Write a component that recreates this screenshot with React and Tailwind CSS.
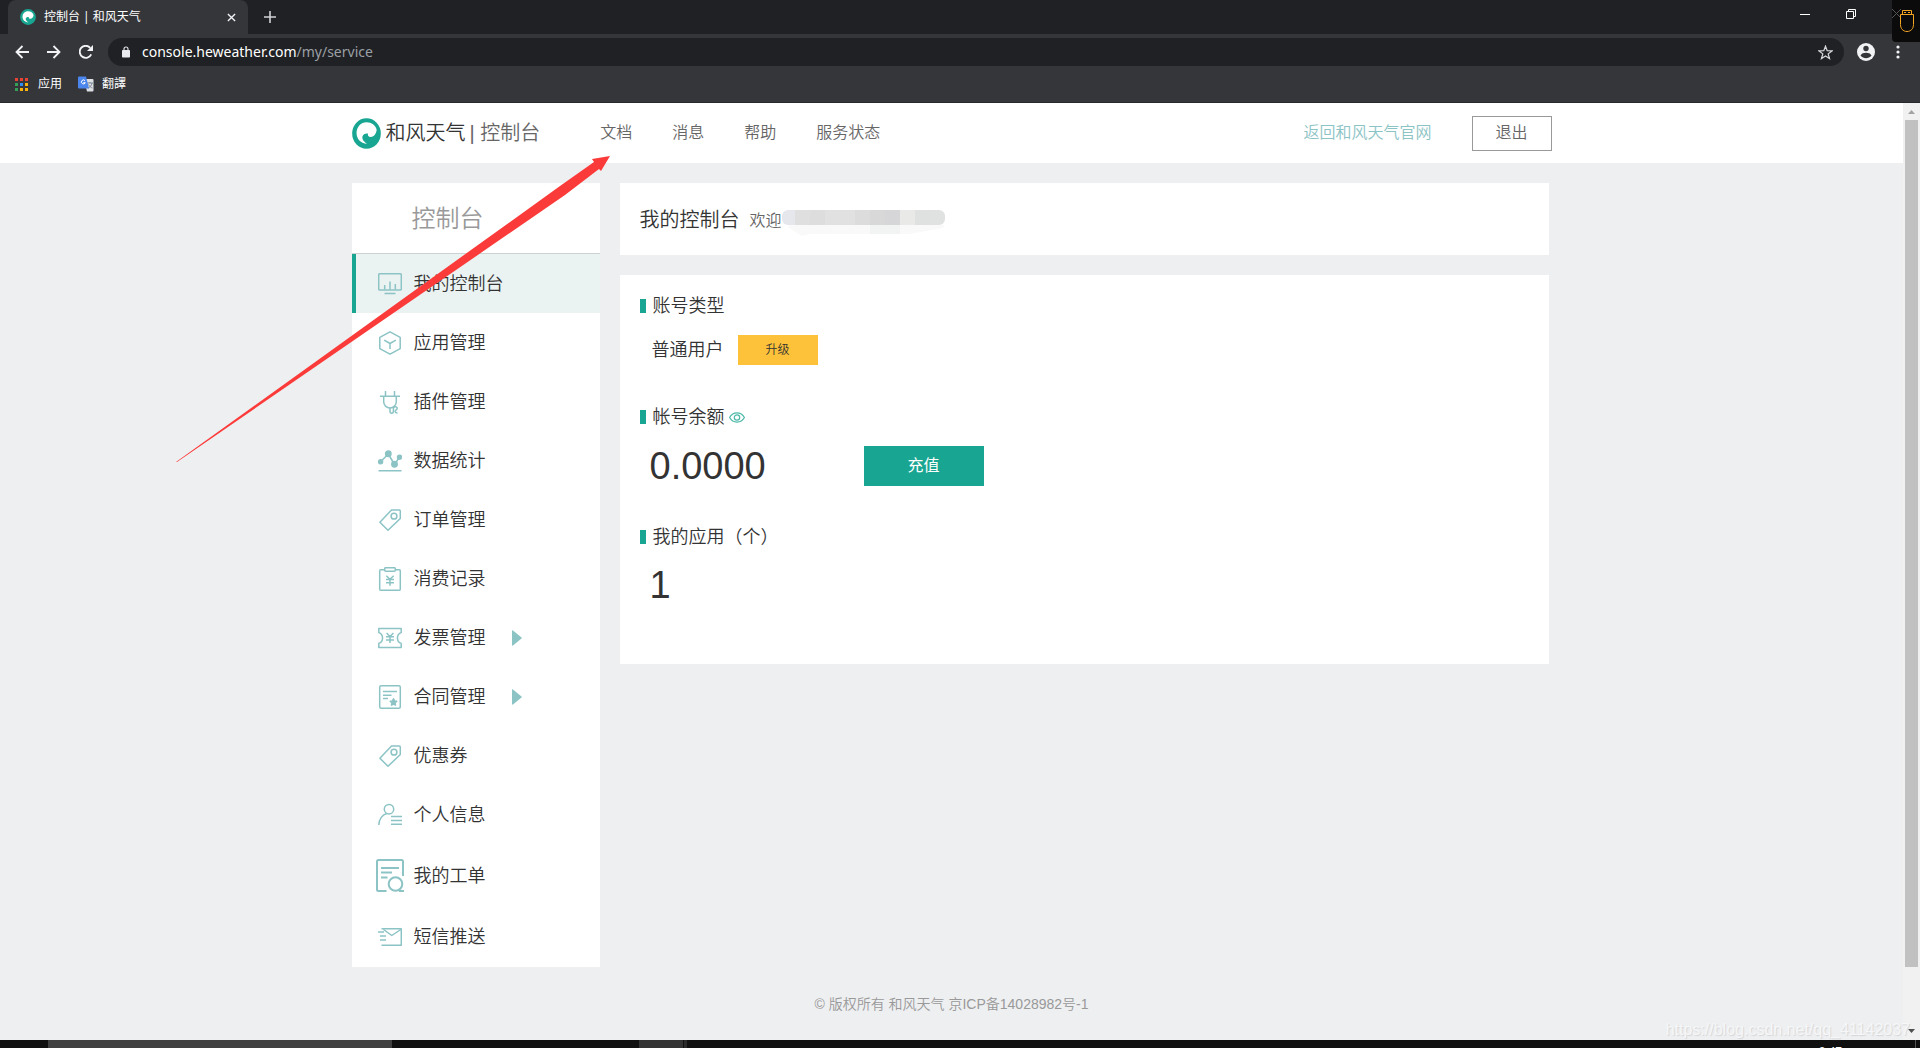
import { useState } from "react";

const NAV = ["文档", "消息", "帮助", "服务状态"];

const MENU = [
    { label: "我的控制台", icon: "monitor" },
    { label: "应用管理", icon: "cube" },
    { label: "插件管理", icon: "plug" },
    { label: "数据统计", icon: "stats" },
    { label: "订单管理", icon: "tag" },
    { label: "消费记录", icon: "clipboard" },
    { label: "发票管理", icon: "ticket", more: true },
    { label: "合同管理", icon: "contract", more: true },
    { label: "优惠券", icon: "tag" },
    { label: "个人信息", icon: "user" },
    { label: "我的工单", icon: "order", large: true },
    { label: "短信推送", icon: "mail" },
];

const ICONS = {
    monitor: (
        <>
            <rect x="0.7" y="1.7" width="22.6" height="16.2" rx="1" />
            <path d="M6.7 17.5v-4.5M12 17.5v-8M17.3 17.5v-5.5M6.5 21.5h11" />
        </>
    ),
    cube: (
        <>
            <path d="M12 0.8 22.2 6.4v11.2L12 23.2 1.8 17.6V6.4z" />
            <path d="M6.2 9.2 12 12.5l5.8-3.3M12 12.5V18" />
        </>
    ),
    plug: (
        <>
            <path d="M2 6.2h20M7.5 1v5M16.5 1v5M5.7 6.5v5.2a6.3 6.3 0 0 0 12.6 0V6.5" />
            <path d="M12 17.8v3.400c0 2.600 3.400 2.600 3.400 0v-2.400c0-2.600 3.800-2.600 3.800-.500 0 1.800-2 1.500-2 3 0 1.200 1 1.700 2.300 1.700" />
        </>
    ),
    stats: (
        <>
            <path d="M2.600 12.800 10.300 5l6.200 10.500 5-7.300M0.500 21.800h23" />
            <circle cx="2.600" cy="12.800" r="2" fill="#8cc3c5" />
            <circle cx="10.300" cy="4.800" r="2.700" fill="#8cc3c5" />
            <circle cx="16.500" cy="15.300" r="2.700" fill="#8cc3c5" />
            <circle cx="21.500" cy="8.200" r="2" fill="#8cc3c5" />
        </>
    ),
    tag: (
        <>
            <path d="M13.500 2h7.800q1 0 1 1v7.500L10 22.300 1.900 14.200z" />
            <circle cx="16" cy="8.200" r="2.900" />
        </>
    ),
    clipboard: (
        <>
            <path d="M6.500 2.800H2.700q-1 0-1 1v18.400q0 1 1 1h18.600q1 0 1-1V3.800q0-1-1-1h-3.800" />
            <rect x="6.700" y="0.700" width="10.600" height="3.600" rx="1" />
            <path d="M8.300 8.700 12 12.300l3.700-3.600M12 12.300v6.400M8 12.500h8M8 15.700h8" />
        </>
    ),
    ticket: (
        <>
            <path d="M0.800 2.400h22.400v4.200c-5 1.500-5 9.300 0 10.800v4.200H0.800v-4.200c5-1.500 5-9.300 0-10.800z" />
            <path d="M8.600 7 12 10.500 15.400 7M12 10.500V17M8 10.700h8M8 14h8" />
        </>
    ),
    contract: (
        <>
            <rect x="1.700" y="0.800" width="20.600" height="22.400" rx="1.500" />
            <path d="M5 6.500h14M5 10.300h8.500M5 13.500h5" />
            <path
                d="m15.500 13.800 1 2.100 2.300.300-1.700 1.600.400 2.300-2-1.100-2 1.100.400-2.300-1.700-1.600 2.300-.300z"
                fill="#8cc3c5"
            />
        </>
    ),
    user: (
        <>
            <circle cx="11" cy="6.200" r="4.700" />
            <path d="M0.800 22c.200-6 3.700-10.500 8-11.500M13 13.500h11M13 17.500h11M13 21.300h11" />
        </>
    ),
    order: (
        <>
            <path d="M11 27.500M10.500 32H2.500Q1 32 1 30.500V2.500Q1 1 2.500 1h23Q27 1 27 2.500V17" />
            <path d="M5 9h18M5 13.500h11M5 18.500h6.500M23 32h5" />
            <circle cx="19.500" cy="25" r="6.800" />
        </>
    ),
    mail: (
        <>
            <path d="M3.500 3.800h19.800v16.400H3.500M0 7h6M2 11h6M2 15h6" />
            <path d="M5.500 4.500 13.800 10.500l9-6" />
        </>
    ),
};

function MenuIcon({ name, large }) {
    return (
        <svg
            viewBox={large ? "0 0 28 33" : "0 0 24 24"}
            fill="none"
            stroke="#8cc3c5"
            strokeWidth={large ? "2" : "1.5"}
            strokeLinejoin="round"
            className={large ? "h-[33px] w-7 shrink-0" : "h-6 w-6 shrink-0"}
        >
            {ICONS[name]}
        </svg>
    );
}

function LogoMark({ className }) {
    return (
        <svg viewBox="0 0 30 32" preserveAspectRatio="none" className={className}>
            <ellipse cx="15" cy="16" rx="14.800" ry="15.800" fill="#18a692" />
            <path
                d="M15.500 26.500C9 26.500 4.700 21.500 4.700 15.500 4.700 9 9.300 4.300 15 4.300c5.500 0 9.200 3.200 10.500 7.500-.300 4.700-3 7.700-6.300 7.700-2 0-3.200-1.200-2.700-3.500-3-.300-5 .700-5.700 3-.700 2.700 1.700 5.500 4.700 7.500z"
                fill="#fff"
            />
        </svg>
    );
}

function Browser() {
    return (
        <div className="relative h-[103px] border-b border-[#28292c] bg-[#35363a] font-['Noto_Sans','Noto_Sans_CJK_SC',sans-serif] font-normal text-white">
            <div className="flex h-[34px] bg-[#202124] pl-2">
                <div className="flex w-60 items-center rounded-t-lg bg-[#35363a] pr-3 pl-3">
                    <LogoMark className="h-4 w-4" />
                    <span className="ml-2 flex-1 text-xs">控制台 | 和风天气</span>
                    <button type="button" aria-label="关闭标签页">
                        <svg viewBox="0 0 10 10" stroke="#f1f3f4" strokeWidth="1.5" className="h-[9px] w-[9px]">
                            <path d="M1 1l8 8M9 1 1 9" />
                        </svg>
                    </button>
                </div>
                <button type="button" aria-label="新标签页" className="ml-4">
                    <svg viewBox="0 0 12 12" stroke="#d0d2d5" strokeWidth="1.600" className="h-3 w-3">
                        <path d="M6 0v12M0 6h12" />
                    </svg>
                </button>
                <div className="mr-16 ml-auto flex items-center gap-9 pb-1.5">
                    <button type="button" aria-label="最小化">
                        <svg viewBox="0 0 10 10" width="10" height="10">
                            <path d="M0 5.500h10" stroke="#fff" />
                        </svg>
                    </button>
                    <button type="button" aria-label="还原">
                        <svg viewBox="0 0 10 10" width="10" height="10" fill="none" stroke="#fff">
                            <path d="M0.500 2.500h7v7h-7zM2.500 2.500v-2h7v7h-2" />
                        </svg>
                    </button>
                </div>
            </div>

            <div className="flex h-9 items-center pr-5 pl-[15px]">
                <button type="button" aria-label="后退" className="mr-[18px]">
                    <svg viewBox="0 0 14 14" width="14" height="14" fill="none" stroke="#f1f3f4" strokeWidth="1.800">
                        <path d="M14 7H1.500M7.500 1l-6 6 6 6" />
                    </svg>
                </button>
                <button type="button" aria-label="前进" className="mr-[18px]">
                    <svg viewBox="0 0 14 14" width="14" height="14" fill="none" stroke="#f1f3f4" strokeWidth="1.800">
                        <path d="M0 7h12.500M6.500 1l6 6-6 6" />
                    </svg>
                </button>
                <button type="button" aria-label="刷新" className="mr-[15px]">
                    <svg viewBox="0 0 14 14" width="14" height="14" fill="none" stroke="#f1f3f4" strokeWidth="1.900">
                        <path d="M12.200 9.300A6 6 0 1 1 11.200 2.800" />
                        <path d="M14 0v6H8z" fill="#f1f3f4" stroke="none" />
                    </svg>
                </button>
                <div className="flex h-7 flex-1 items-center rounded-full bg-[#202124] pr-[11px] pl-[14px]">
                    <svg viewBox="0 0 8 12" width="8" height="12" fill="#e8eaed">
                        <rect y="4" width="8" height="7.500" rx="0.800" />
                        <path d="M2 4.500V3a2 2 0 0 1 4 0v1.500" fill="none" stroke="#e8eaed" strokeWidth="1.100" />
                    </svg>
                    <a href="#" className="ml-3 flex-1 text-sm text-white">
                        console.heweather.com<span className="text-[#9aa0a6]">/my/service</span>
                    </a>
                    <svg viewBox="0 0 24 24" width="15" height="15" fill="none" stroke="#d5d7da" strokeWidth="2">
                        <path d="m12 2 2.700 7.200 7.600.300-6 4.700 2.100 7.400L12 17.400l-6.400 4.200 2.100-7.400-6-4.700 7.600-.300z" />
                    </svg>
                </div>
                <svg viewBox="0 0 18 18" width="18" height="18" className="ml-[13px]">
                    <circle cx="9" cy="9" r="9" fill="#f1f3f4" />
                    <circle cx="9" cy="5.500" r="2.700" fill="#35363a" />
                    <path d="M3.500 12.600c1-2.200 3.200-2.900 5.500-2.900s4.500.700 5.500 2.900C13 14.600 11 15.300 9 15.300s-4-.700-5.500-2.700z" fill="#35363a" />
                </svg>
                <svg viewBox="0 0 4 14" width="4" height="14" fill="#f1f3f4" className="ml-[21px]">
                    <circle cx="2" cy="2" r="1.600" />
                    <circle cx="2" cy="7" r="1.600" />
                    <circle cx="2" cy="12" r="1.600" />
                </svg>
            </div>

            <div className="flex items-center pt-1.5 pl-[15px] text-xs">
                <svg viewBox="0 0 13 13" width="13" height="13">
                    <path d="M0 0h3v3H0zM5 0h3v3H5zM10 0h3v3h-3z" fill="#e94335" />
                    <path d="M0 5h3v3H0zM0 10h3v3H0z" fill="#34a058" />
                    <path d="M5 5h3v3H5z" fill="#2d8cf5" />
                    <path d="M10 5h3v3h-3zM5 10h3v3H5zM10 10h3v3h-3z" fill="#fbb10b" />
                </svg>
                <a href="#" className="ml-2.5 leading-4">应用</a>
                <svg viewBox="0 0 16 16" width="16" height="16" className="ml-4">
                    <path d="M6 3h8.500q1 0 1 1v10.500q0 1-1 1H9z" fill="#dcdfe3" />
                    <path d="M9 7h6M12 6v1M14 7c-.500 3-2 4-4 5M10.500 8.500c1 2 2.500 3 4 3.500" stroke="#7b8794" fill="none" />
                    <path d="M1 0.500h7l3 12H1q-1 0-1-1v-10q0-1 1-1z" fill="#4a86ec" />
                    <path d="M7 4.700a2 2 0 1 0 .300 2H5.300" stroke="#fff" fill="none" />
                </svg>
                <a href="#" className="ml-2 leading-4">翻譯</a>
            </div>

            <div className="absolute top-0 right-0 flex h-[42px] w-7 items-start justify-center rounded-bl bg-[#0b0b0b] pt-[9px]">
                <svg viewBox="0 0 28 24" width="28" height="24" fill="none">
                    <path d="M0 0l9 9M9 0 0 9" stroke="#555" />
                    <path d="M10.500 5V1.500h9V5M8.500 5.500h13v10c0 4-2.500 7-6.500 7s-6.500-3-6.500-7z" stroke="#f5a623" />
                    <path d="M12 3.500h2M16 3.500h2" stroke="#f5a623" />
                </svg>
            </div>
        </div>
    );
}

function Header() {
    return (
        <header className="h-[60px] bg-white text-[#666]">
            <div className="mx-auto flex h-full max-w-[1200px] items-center">
                <a href="#" className="flex items-center text-xl">
                    <LogoMark className="mr-[5px] h-[31px] w-[29px]" />
                    <span className="text-[#333]">和风天气</span>
                    <span className="ml-1">| 控制台</span>
                </a>
                <nav className="ml-[60px] flex gap-10">
                    {NAV.map((item) => (
                        <a key={item} href="#">
                            {item}
                        </a>
                    ))}
                </nav>
                <a href="#" className="ml-auto text-[#8cc3c5]">
                    返回和风天气官网
                </a>
                <button type="button" className="ml-10 h-[35px] w-20 border border-[#999]">
                    退出
                </button>
            </div>
        </header>
    );
}

function Sidebar({ active, onSelect }) {
    return (
        <aside className="w-[248px] bg-white">
            <h2 className="h-[71px] border-b border-[#ccd2d2] pl-[60px] text-2xl leading-[72px] font-[350] text-[#999]">
                控制台
            </h2>
            <ul className="pb-px">
                {MENU.map(({ label, icon, more, large }) => (
                    <li key={label}>
                        <button
                            type="button"
                            onClick={() => onSelect(label)}
                            className={`flex w-full items-center border-l-4 text-lg ${large ? "h-[63px] gap-2.5 pl-5" : "h-[59px] gap-3 pl-[22px]"} ${
                                active === label
                                    ? "border-[#18a692] bg-[#ebf2f2]"
                                    : "border-transparent"
                            }`}
                        >
                            <MenuIcon name={icon} large={large} />
                            {label}
                            {more && (
                                <svg viewBox="0 0 10 16" width="10" height="16" fill="#8cc3c5" className="ml-[14px]">
                                    <path d="M0 1q0-1 1-.5l8.500 7q.7.500 0 1L1 15.500q-1 .5-1-.5z" />
                                </svg>
                            )}
                        </button>
                    </li>
                ))}
            </ul>
        </aside>
    );
}

function SectionTitle({ children }) {
    return (
        <h3 className="flex h-6 items-center gap-[7px] text-lg font-[350]">
            <span className="h-3.5 w-1.5 bg-[#18a692]"></span>
            {children}
        </h3>
    );
}

// blurred-out account name, one cell per colour
const MASK = ["#e6e7ec", "#dfdfdf", "#dddddd", "#e1e1e1", "#e1e1e1", "#dcdcdc", "#d8d8d9", "#d6d6d8", "#e9e9e7", "#dfe0e0", "#e0e2e2"];

function Console() {
    return (
        <main className="mr-[3px] flex-1">
            <section className="flex h-[72px] items-center bg-white pt-0.5 pl-5">
                <h1 className="text-xl font-[350]">我的控制台</h1>
                <span className="ml-2.5 pt-0.5 text-[#666]">欢迎</span>
                <svg viewBox="0 0 163 26" width="163" height="26" className="mt-1.5">
                    <path d="M8 15h154l-1 3-34 6H28l-8 2-14-9z" fill="#f9f9f9" />
                    <path d="M88 15h30v9H88z" fill="#f2f4f4" />
                    <clipPath id="mask">
                        <rect width="163" height="15" rx="6" />
                    </clipPath>
                    <g clipPath="url(#mask)">
                        {MASK.map((color, i) => (
                            <rect key={i} x={i * 15 - 2} width="16" height="15" fill={color} />
                        ))}
                    </g>
                </svg>
            </section>

            <section className="mt-5 h-[389px] bg-white px-5 pt-[19px]">
                <SectionTitle>账号类型</SectionTitle>
                <div className="mt-[17px] flex items-center pl-3">
                    <span className="text-lg">普通用户</span>
                    <button type="button" className="ml-3.5 h-[30px] w-20 bg-[#fdc239] text-xs">
                        升级
                    </button>
                </div>

                <div className="mt-10 flex items-center gap-1">
                    <SectionTitle>帐号余额</SectionTitle>
                    <button type="button" aria-label="显示余额">
                        <svg viewBox="0 0 16 11" width="16" height="11" fill="none" stroke="#4db8a8" strokeWidth="1.200">
                            <path d="M0.600 5.500C4-.600 12-.600 15.400 5.500 12 11.600 4 11.600 0.600 5.500z" />
                            <circle cx="8" cy="5.500" r="2.700" />
                        </svg>
                    </button>
                </div>
                <div className="mt-[17px] flex items-center pl-2.5">
                    <span className="w-[214px] text-[38px] leading-10">0.0000</span>
                    <button type="button" className="h-10 w-[120px] bg-[#18a692] font-normal text-white">
                        充值
                    </button>
                </div>

                <div className="mt-[39px]">
                    <SectionTitle>我的应用（个）</SectionTitle>
                </div>
                <p className="mt-4 pl-2.5 text-[38px] leading-10">1</p>
            </section>
        </main>
    );
}

function Scrollbar() {
    return (
        <div className="flex w-[17px] flex-col items-center bg-[#f1f1f1]">
            <svg viewBox="0 0 7 4" width="7" height="4" fill="#a3a3a3" className="mt-[7px] mb-1.5">
                <path d="M0 4h7L3.500 0z" />
            </svg>
            <div className="w-[13px] flex-1 bg-[#c1c1c1]"></div>
            <svg viewBox="0 0 7 4" width="7" height="4" fill="#505050" className="mt-[62px] mb-[7px]">
                <path d="M0 0h7L3.500 4z" />
            </svg>
        </div>
    );
}

export default function App() {
    const [active, setActive] = useState("我的控制台");

    return (
        <div className="relative flex min-h-screen flex-col overflow-hidden font-['Liberation_Sans','Noto_Sans_CJK_SC',sans-serif] font-[350] text-[#333]">
            <Browser />

            <div className="flex flex-1">
                <div className="flex-1 bg-[#eeeff1]">
                    <Header />
                    <div className="mx-auto mt-5 flex max-w-[1200px] items-start gap-5">
                        <Sidebar active={active} onSelect={setActive} />
                        <Console />
                    </div>
                    <footer className="pt-[27px] pb-6 text-center text-sm text-[#999]">
                        © 版权所有 和风天气 京ICP备14028982号-1
                    </footer>
                </div>
                <Scrollbar />
            </div>

            <div className="flex h-2 overflow-hidden bg-[#101010]">
                <div className="ml-12 w-[344px] bg-[#404040]"></div>
                <div className="ml-[247px] w-11 bg-[#333]"></div>
                <div className="ml-px w-[3px] bg-[#2a2a2a]"></div>
                <span className="mr-[73px] ml-auto pt-1 text-xs text-white">8:47</span>
                <div className="mr-1 w-px bg-[#555]"></div>
            </div>

            {/* annotation arrow */}
            <svg
                viewBox="0 0 440 310"
                width="440"
                height="310"
                fill="#fb3b3a"
                className="pointer-events-none absolute top-[154px] left-[174px]"
            >
                <path d="M2 308 386 32l34-24-2-3 18-3-9 15-2-2-34 26L3 308z" />
            </svg>

            <span className="pointer-events-none absolute right-2.5 bottom-1.5 text-base text-[#f6f7f8] [text-shadow:1px_1px_1px_#d4d5d7]">
                https://blog.csdn.net/qq_41142037
            </span>
        </div>
    );
}
